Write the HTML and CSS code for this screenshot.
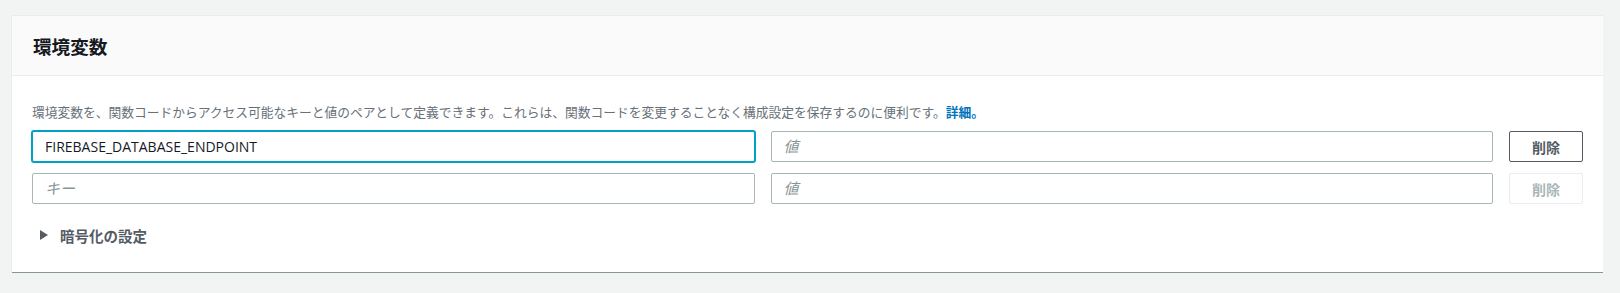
FILE: index.html
```html
<!DOCTYPE html>
<html lang="ja">
<head>
    <meta charset="UTF-8">
    <title>環境変数</title>
    <link rel="stylesheet" href="styles.css">
</head>
<body>
    <div class="panel">
        <div class="panel-header">
            <h2>環境変数</h2>
        </div>
        <div class="panel-body">
            <p class="help">環境変数を、関数コードからアクセス可能なキーと値のペアとして定義できます。これらは、関数コードを変更することなく構成設定を保存するのに便利です。<a href="#">詳細。</a></p>

            <div class="env-row">
                <input type="text" class="field focused" value="FIREBASE_DATABASE_ENDPOINT" placeholder="キー">
                <input type="text" class="field" placeholder="値">
                <button class="remove-btn">削除</button>
            </div>
            <div class="env-row">
                <input type="text" class="field" placeholder="キー">
                <input type="text" class="field" placeholder="値">
                <button class="remove-btn" disabled>削除</button>
            </div>

            <div class="expander">
                <span class="caret"></span>
                <span>暗号化の設定</span>
            </div>
        </div>
    </div>
</body>
</html>
```

FILE: styles.css
```css
body {
    margin: 0;
    padding: 15px 17px 0 12px;
    background-color: #f2f3f3;
    font-family: "Noto Sans CJK JP", "Open Sans", sans-serif;
    color: #16191f;
}

/* Panel */
.panel {
    background: white;
    border-top: 1px solid #eaeded;
    border-bottom: 1px solid #879596;
    box-shadow: -1px 0 0 #eaeded;
}

.panel-header {
    background: #fafafa;
    border-bottom: 1px solid #eaeded;
    height: 59px;
    display: flex;
    align-items: center;
    padding: 0 21px;
}

.panel-header h2 {
    margin: 0;
    font-size: 18.6px;
    font-weight: bold;
    color: #16191f;
}

.panel-body {
    padding: 26px 20px 0 20px;
    height: 196px;
    box-sizing: border-box;
}

.help {
    margin: 0 0 9px 0;
    font-size: 12.75px;
    line-height: 20px;
    color: #687078;
    white-space: nowrap;
}

.help a {
    color: #0073bb;
    font-weight: bold;
    text-decoration: none;
}

/* Key / value rows */
.env-row {
    display: grid;
    grid-template-columns: 1fr 1fr 74px;
    gap: 16px;
    align-items: center;
    margin-bottom: 11px;
}

.field {
    height: 31px;
    box-sizing: border-box;
    padding: 0 12px;
    border: 1px solid #aab7b8;
    border-radius: 2px;
    font-family: "Open Sans", "Noto Sans CJK JP", sans-serif;
    font-size: 14px;
    color: #16191f;
    background: white;
    outline: none;
}

.field::placeholder {
    color: #879596;
    font-style: italic;
    font-family: "Noto Sans CJK JP", sans-serif;
    font-size: 15px;
}

.field.focused {
    border-color: #00a1c9;
    box-shadow: 0 0 0 1px #00a1c9;
}

.remove-btn {
    height: 31px;
    border: 1px solid #545b64;
    border-radius: 2px;
    background: white;
    color: #545b64;
    font-family: "Noto Sans CJK JP", sans-serif;
    font-size: 14px;
    font-weight: bold;
    cursor: pointer;
}

.remove-btn:disabled {
    border-color: #eaeded;
    color: #aab7b8;
    cursor: default;
}

/* Encryption settings */
.expander {
    display: flex;
    align-items: center;
    gap: 12px;
    margin-top: 21px;
    height: 20px;
    padding-left: 8px;
    font-size: 14.5px;
    font-weight: bold;
    color: #545b64;
}

.caret {
    width: 0;
    height: 0;
    border-top: 5px solid transparent;
    border-bottom: 5px solid transparent;
    border-left: 8px solid #545b64;
}
```
